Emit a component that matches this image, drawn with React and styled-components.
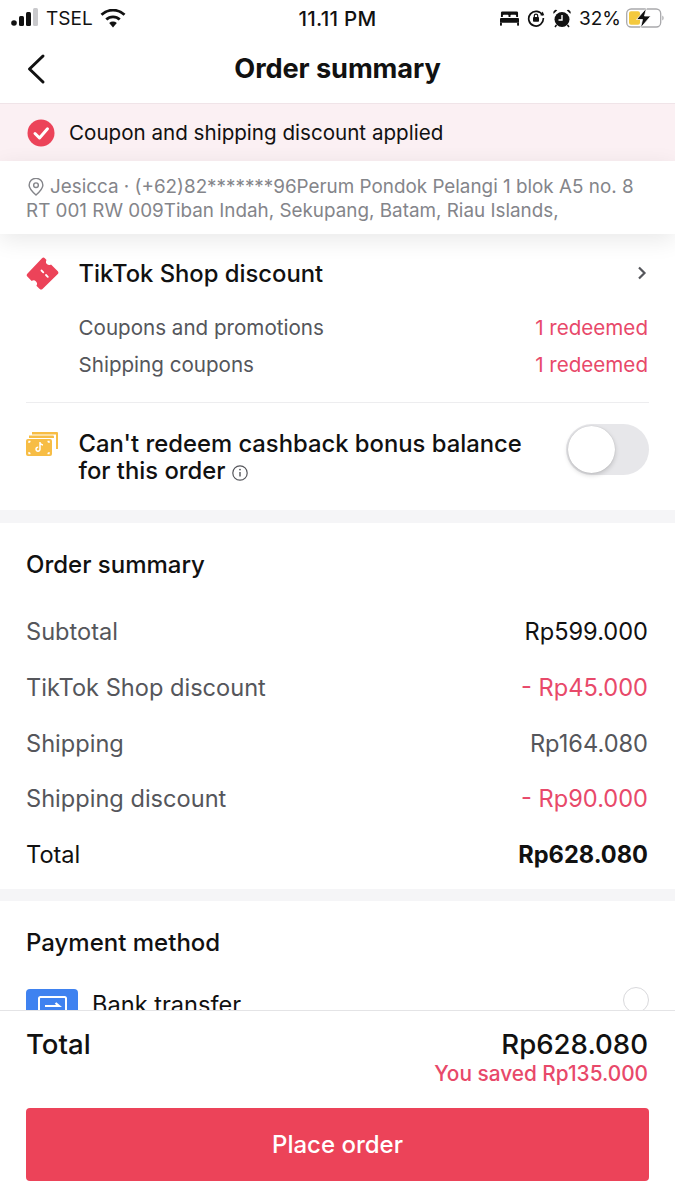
import React from "react";
import styled, { createGlobalStyle } from "styled-components";

const Global = createGlobalStyle`
  html, body { margin: 0; padding: 0; background: #fff; }
  body { font-family: Inter, "Noto Sans", "Liberation Sans", sans-serif; color: #111; }
  * { box-sizing: border-box; }
`;

const Page = styled.div`
  width: 675px; height: 1200px; display: flex; flex-direction: column;
  overflow: hidden; background: #fff;
`;
const StatusBar = styled.div`
  height: 36px; flex: none; display: grid; grid-template-columns: 1fr auto 1fr;
  align-items: center; padding: 0 10px; font-size: 19px; color: #111;
`;
const StatusLeft = styled.div`display: flex; align-items: center; gap: 7px;`;
const StatusRight = styled.div`display: flex; align-items: center; justify-content: flex-end; gap: 8px;`;
const Clock = styled.div`font-size: 20.5px; font-weight: 500; letter-spacing: 0.3px;`;
const BatterySlot = styled.div`margin-left: -3px; line-height: 0;`;
const Nav = styled.div`
  height: 68px; flex: none; display: flex; align-items: center; justify-content: center;
  position: relative; border-bottom: 1px solid #f0e4e8;
`;
const BackButton = styled.div`position: absolute; left: 24px; top: 15px; line-height: 0;`;
const NavTitle = styled.h1`margin: 0 0 2px; font-size: 27.2px; font-weight: 700; letter-spacing: -0.1px;`;
const Notice = styled.div`
  height: 57px; flex: none; background: #fbf0f3; display: flex; align-items: center;
  gap: 14px; padding: 0 27px; font-size: 20.6px;
`;
const Address = styled.div`
  height: 73px; flex: none; padding: 14px 26px 0; font-size: 18.85px; line-height: 23.5px;
  color: #84858a; white-space: nowrap; overflow: hidden; position: relative; z-index: 1;
  background: #fff; box-shadow: 0 6px 22px rgba(0, 0, 0, 0.09);
`;
const Pin = styled.span`display: inline-block; vertical-align: -3px; margin: 0 6px 0 2px; line-height: 0;`;
const Scroll = styled.div`flex: 1; min-height: 0; overflow: hidden; background: #f5f5f7;`;
const Section = styled.section`background: #fff; padding: ${p => p.$pad}; margin-bottom: ${p => p.$gap || 0}px;`;
const DiscountHead = styled.div`display: flex; align-items: center; height: 38px; margin-bottom: 23px;`;
const IconSlot = styled.div`width: 52.500px; flex: none; line-height: 0;`;
const ChevronSlot = styled.div`margin-right: 2px; line-height: 0;`;
const DiscountTitle = styled.div`flex: 1; font-size: 23.800px; font-weight: 500;`;
const SubRows = styled.div`display: flex; flex-direction: column; gap: 12px; padding: 0 1px 0 52.500px;`;
const SubRow = styled.div`
  display: flex; justify-content: space-between; font-size: 20.600px; line-height: 25px; color: #55565b;
`;
const Red = styled.span`color: #e8496a;`;
const Divider = styled.div`height: 1px; background: #ededef; margin-top: 25px;`;
const Bonus = styled.div`display: flex; align-items: flex-start; padding-top: 21px;`;
const BonusIcon = styled(IconSlot)`padding-top: 8px;`;
const BonusText = styled.div`
  width: 480px; margin-top: 6px; font-size: 23.800px; line-height: 27px; font-weight: 500;
`;
const Info = styled.span`display: inline-block; vertical-align: -2px; margin-left: 7px; line-height: 0;`;
const Toggle = styled.div`
  margin-left: auto; width: 83px; height: 51px; border-radius: 26px; background: #e7e7ea; position: relative;
`;
const Knob = styled.div`
  position: absolute; left: 2px; top: 2px; width: 47px; height: 47px; border-radius: 50%;
  background: #fff; box-shadow: 0 2px 5px rgba(0, 0, 0, 0.18), 0 0 1px rgba(0, 0, 0, 0.2);
`;
const SectionTitle = styled.h2`margin: 0; font-size: 24px; line-height: 28px; font-weight: 500;`;
const SummaryRows = styled.div`display: flex; flex-direction: column; gap: 26px; margin-top: 38px;`;
const SummaryRow = styled.div`
  display: flex; justify-content: space-between; font-size: 23.600px; line-height: 29.800px;
  color: ${p => p.$strong ? "#111" : "#55565b"};
`;
const Amount = styled.span`
  color: ${p => p.$red ? "#e8496a" : p.$grey ? "#55565b" : "#111"};
  font-weight: ${p => p.$bold ? 700 : 400};
`;
const PaymentRow = styled.div`display: flex; align-items: center; margin-top: 32px;`;
const BankLabel = styled.div`margin-left: 14px; font-size: 23.600px; line-height: 30px; padding-bottom: 7px;`;
const BankIcon = styled.div`
  width: 52px; height: 40px; border-radius: 4px; background: #3f82f0; display: flex;
  justify-content: center; padding-top: 7px; flex: none;
`;
const Radio = styled.div`
  margin-left: auto; margin-right: -1px; width: 26px; height: 26px; border-radius: 50%;
  border: 1.5px solid #d9d9dc; position: relative; top: -9px;
`;
const Footer = styled.footer`
  flex: none; height: 190px; background: #fff; border-top: 1px solid #e4e4e6; padding: 17px 26px 0 26px;
  position: relative; z-index: 1;
`;
const TotalRow = styled.div`
  display: flex; justify-content: space-between; font-size: 27.600px; line-height: 33px; font-weight: 500;
  padding-right: 1px;
`;
const Saved = styled.div`
  text-align: right; padding-right: 1px; color: #e8496a; font-size: 20.800px; line-height: 24px; font-weight: 500; margin-top: 1px;
`;
const PlaceOrder = styled.button`
  display: block; width: 100%; height: 73px; margin-top: 22px; border: 0; border-radius: 4px;
  background: #ec4359; color: #fff; font: 500 24px Inter, "Noto Sans", sans-serif;
`;

const Signal = () => (
  <svg width="29" height="20" viewBox="0 0 29 20">
    <circle cx="4" cy="15" r="2.800" fill="#111" />
    <rect x="9" y="8" width="5" height="10" rx="1.500" fill="#111" />
    <rect x="16" y="4" width="5" height="14" rx="1.500" fill="#111" />
    <rect x="23" y="0" width="5" height="18" rx="1.500" fill="#c9c9cc" />
  </svg>
);
const Wifi = () => (
  <svg width="26" height="19" viewBox="0 0 26 19">
    <path d="M13 18.500 9.200 14a5.600 5.600 0 0 1 7.600 0Z" fill="#111" />
    <path d="M6.300 10.500a9.600 9.600 0 0 1 13.400 0" fill="none" stroke="#111" strokeWidth="2.800" />
    <path d="M1.500 5.800a16.500 16.500 0 0 1 23 0" fill="none" stroke="#111" strokeWidth="2.800" />
  </svg>
);
const Bed = () => (
  <svg width="19" height="15" viewBox="0 0 20 15" fill="#111">
    <path d="M2.500 0h15A1.500 1.500 0 0 1 19 1.500V6h-2V4.500a1 1 0 0 0-1-1h-4a1 1 0 0 0-1 1V6H9V4.500a1 1 0 0 0-1-1H4a1 1 0 0 0-1 1V6H1V1.500A1.500 1.500 0 0 1 2.500 0Z" />
    <path d="M1 7h18a1 1 0 0 1 1 1v4H0V8a1 1 0 0 1 1-1Z" />
    <rect x="0" y="12" width="2" height="3" />
    <rect x="18" y="12" width="2" height="3" />
  </svg>
);
const RotationLock = () => (
  <svg width="18" height="18" viewBox="0 0 18 18" fill="none" stroke="#111" strokeWidth="1.700">
    <path d="M15.600 6.500A7.300 7.300 0 1 0 16.300 9" />
    <path d="M13.200 6.300h4l-1.500-3.700Z" fill="#111" stroke="none" />
    <rect x="6" y="8" width="6" height="4.800" rx=".8" fill="#111" stroke="none" />
    <path d="M7.300 8V6.800a1.700 1.700 0 0 1 3.400 0V8" strokeWidth="1.200" />
  </svg>
);
const Alarm = () => (
  <svg width="18" height="19" viewBox="0 0 18 19">
    <circle cx="9" cy="10.500" r="7.500" fill="#111" />
    <path d="M.7 4.800 4.300 1.300a2.600 2.600 0 0 0-3.600 3.500ZM17.300 4.800 13.700 1.300a2.600 2.600 0 0 1 3.600 3.500Z" fill="#111" />
    <path d="M3.500 16 2 18M14.500 16l1.500 2" stroke="#111" strokeWidth="1.500" />
    <path d="M9 6v5H5.500" fill="none" stroke="#fff" strokeWidth="1.400" />
  </svg>
);
const Battery = () => (
  <svg width="39" height="20" viewBox="0 0 39 20">
    <rect x=".7" y="1" width="34" height="18" rx="4.500" fill="#fff" stroke="#a9a9ac" strokeWidth="1.300" />
    <rect x="3" y="3.200" width="11" height="13.600" rx="2" fill="#f4c93e" />
    <path d="M36.300 7.500a3 3 0 0 1 0 5Z" fill="#a9a9ac" />
    <path d="M20.500 0 10.500 11.500h6L14.500 20l10.300-12h-6.300Z" fill="#111" stroke="#fff" strokeWidth=".8" />
  </svg>
);
const Back = () => (
  <svg width="24" height="36" viewBox="0 0 24 36" fill="none" stroke="#111" strokeWidth="3" strokeLinecap="round" strokeLinejoin="round">
    <path d="M19 5 5.500 18 19 31" />
  </svg>
);
const Check = () => (
  <svg width="28" height="28" viewBox="0 0 28 28">
    <circle cx="14" cy="14" r="13.500" fill="#ec4359" />
    <path d="M8 14.500 12.500 19 20.500 9.800" fill="none" stroke="#fff" strokeWidth="3" strokeLinecap="round" strokeLinejoin="round" />
  </svg>
);
const PinIcon = () => (
  <svg width="16" height="18" viewBox="0 0 17 19" fill="none" stroke="#84858a" strokeWidth="1.500">
    <path d="M8.500 18C4 14 1.200 11 1.200 7.600a7.300 7.300 0 0 1 14.600 0C15.800 11 13 14 8.500 18Z" />
    <circle cx="8.500" cy="7.600" r="2.500" />
  </svg>
);
const Ticket = () => (
  <svg width="33" height="33" viewBox="0 0 33 33">
    <path d="M16 1.200c.9-.8 2-.8 2.800 0l1.700 1.700c-.9 1.500-.7 3 .4 4.100s2.700 1.300 4.100.4l6.800 6.800c.8.800.8 2 0 2.800L16.500 32c-.8.800-2 .8-2.800 0l-3.300-3.300c1-1.500.8-3.100-.4-4.300s-2.900-1.400-4.300-.4l-4.400-4.400c-.8-.8-.8-2 0-2.800Z" fill="#ec4359" />
    <path d="M15.500 13.500l1.800 1.800M20 18l1.800 1.800" stroke="#fff" strokeWidth="1.800" strokeLinecap="round" />
  </svg>
);
const Chevron = () => (
  <svg width="10" height="14" viewBox="0 0 10 14" fill="none" stroke="#55565b" strokeWidth="2.200">
    <path d="m2 1.500 5.500 5.500L2 12.500" />
  </svg>
);
const Cash = () => (
  <svg width="32" height="24" viewBox="0 0 32 24">
    <path d="M6 0h25a1 1 0 0 1 1 1v16h-2V2.500H6Z" fill="#f7bd45" />
    <path d="M3 3.500h24a1 1 0 0 1 1 1V6H3Z" fill="#f7bd45" />
    <rect x="0" y="7" width="26" height="17" rx="2" fill="#f7bd45" />
    <path d="M14 10v7.200a2 2 0 1 1-1.800-2M14 10c.3 1.800 1.500 2.800 3 3" fill="none" stroke="#fff" strokeWidth="1.500" />
    <path d="M3 11v-1.500h1.500M23 11v-1.500h-1.500M3 20v1.500h1.500M23 20v1.500h-1.500" fill="none" stroke="#fff" strokeWidth="1.300" />
  </svg>
);
const InfoIcon = () => (
  <svg width="16" height="16" viewBox="0 0 16 16" fill="none" stroke="#55565b" strokeWidth="1.200">
    <circle cx="8" cy="8" r="7.200" />
    <path d="M8 7v4.500" strokeWidth="1.400" />
    <circle cx="8" cy="4.600" r=".9" fill="#55565b" stroke="none" />
  </svg>
);
const Transfer = () => (
  <svg width="29" height="33" viewBox="0 0 29 33" fill="none" stroke="#fff" strokeWidth="2">
    <rect x="1" y="1" width="27" height="31" rx="1.500" />
    <path d="M7 10h14l-3.500-3M22 17H8l3.500 3" strokeWidth="2.200" />
  </svg>
);

export default function App() {
  return (
    <Page>
      <Global />
      <StatusBar>
        <StatusLeft><Signal /><span>TSEL</span><Wifi /></StatusLeft>
        <Clock>11.11 PM</Clock>
        <StatusRight><Bed /><RotationLock /><Alarm /><span>32%</span><BatterySlot><Battery /></BatterySlot></StatusRight>
      </StatusBar>
      <Nav>
        <BackButton><Back /></BackButton>
        <NavTitle>Order summary</NavTitle>
      </Nav>
      <Notice><Check /><span>Coupon and shipping discount applied</span></Notice>
      <Address>
        <Pin><PinIcon /></Pin>Jesicca · (+62)82*******96Perum Pondok Pelangi 1 blok A5 no. 8<br />
        RT 001 RW 009Tiban Indah, Sekupang, Batam, Riau Islands,
      </Address>
      <Scroll>
        <Section $pad="20px 26px 26px" $gap={13}>
          <DiscountHead>
            <IconSlot><Ticket /></IconSlot>
            <DiscountTitle>TikTok Shop discount</DiscountTitle>
            <ChevronSlot><Chevron /></ChevronSlot>
          </DiscountHead>
          <SubRows>
            <SubRow><span>Coupons and promotions</span><Red>1 redeemed</Red></SubRow>
            <SubRow><span>Shipping coupons</span><Red>1 redeemed</Red></SubRow>
          </SubRows>
          <Divider />
          <Bonus>
            <BonusIcon><Cash /></BonusIcon>
            <BonusText>Can't redeem cashback bonus balance for this order<Info><InfoIcon /></Info></BonusText>
            <Toggle><Knob /></Toggle>
          </Bonus>
        </Section>
        <Section $pad="28px 27px 19px 26px" $gap={12}>
          <SectionTitle>Order summary</SectionTitle>
          <SummaryRows>
            <SummaryRow><span>Subtotal</span><Amount>Rp599.000</Amount></SummaryRow>
            <SummaryRow><span>TikTok Shop discount</span><Amount $red>- Rp45.000</Amount></SummaryRow>
            <SummaryRow><span>Shipping</span><Amount $grey>Rp164.080</Amount></SummaryRow>
            <SummaryRow><span>Shipping discount</span><Amount $red>- Rp90.000</Amount></SummaryRow>
            <SummaryRow $strong><span>Total</span><Amount $bold>Rp628.080</Amount></SummaryRow>
          </SummaryRows>
        </Section>
        <Section $pad="28px 27px 0 26px">
          <SectionTitle>Payment method</SectionTitle>
          <PaymentRow>
            <BankIcon><Transfer /></BankIcon>
            <BankLabel>Bank transfer</BankLabel>
            <Radio />
          </PaymentRow>
        </Section>
      </Scroll>
      <Footer>
        <TotalRow><span>Total</span><span>Rp628.080</span></TotalRow>
        <Saved>You saved Rp135.000</Saved>
        <PlaceOrder>Place order</PlaceOrder>
      </Footer>
    </Page>
  );
}
